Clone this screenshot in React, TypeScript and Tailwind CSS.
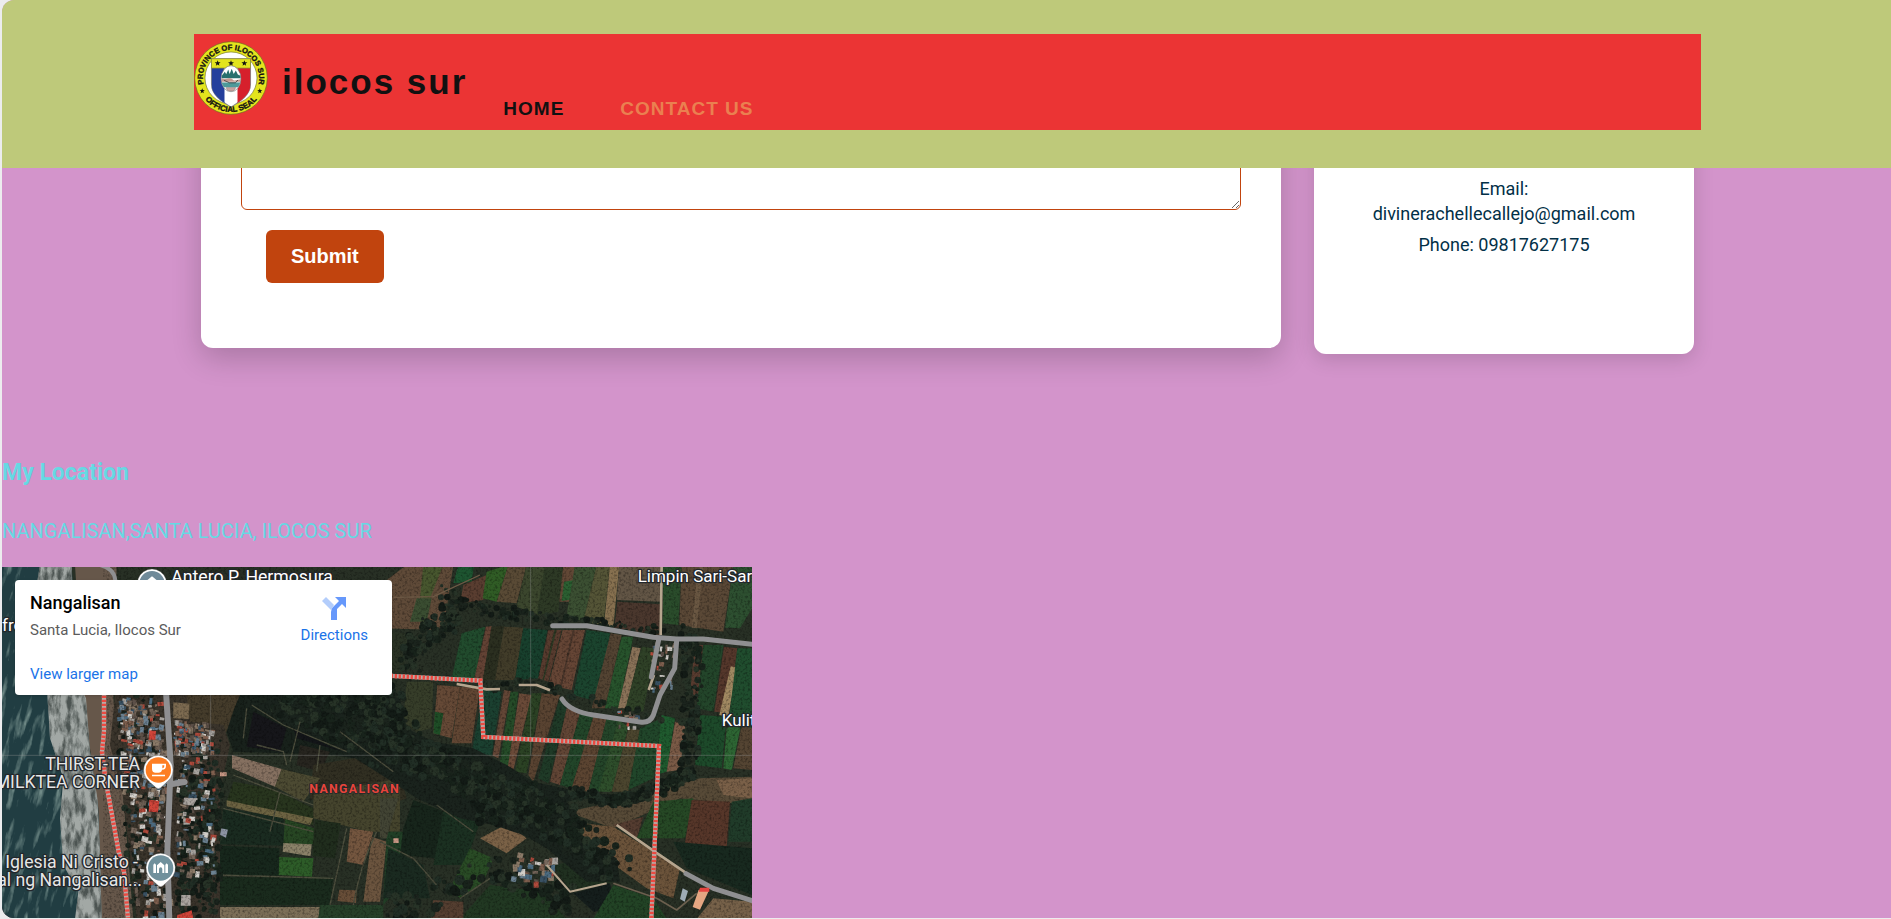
import React from "react";

function createRandom(seed: number) {
  let state = seed;
  return () => {
    state = (state * 1664525 + 1013904223) % 4294967296;
    return state / 4294967296;
  };
}

function Star({ x, y, r, fill = "#111" }: { x: number; y: number; r: number; fill?: string }) {
  const points = Array.from({ length: 10 }, (_, i) => {
    const a = (Math.PI / 5) * i - Math.PI / 2;
    const d = i % 2 ? r * 0.42 : r;
    return `${(x + d * Math.cos(a)).toFixed(2)},${(y + d * Math.sin(a)).toFixed(2)}`;
  }).join(" ");
  return <polygon points={points} fill={fill} />;
}

function Seal() {
  return (
    <svg viewBox="0 0 216 216" className="size-[74px] shrink-0" role="img" aria-label="Province of Ilocos Sur official seal">
      <defs>
        <path id="seal-top" d="M 43 158 A 82 82 0 1 1 173 158" />
        <path id="seal-bottom" d="M 12 124 A 97 97 0 0 0 204 124" />
        <clipPath id="seal-shield">
          <path d="M51 78H165V126C165 156 138 174 108 193C78 174 51 156 51 126Z" />
        </clipPath>
        <clipPath id="seal-oval">
          <ellipse cx="108" cy="110" rx="28" ry="37" />
        </clipPath>
      </defs>
      <circle cx="108" cy="108" r="106" fill="#e3e41d" stroke="#6e7020" strokeWidth="2" />
      <circle cx="108" cy="108" r="76" fill="#fff" stroke="#77792c" strokeWidth="2" />
      <path d="M51 52H165V126C165 156 138 174 108 193C78 174 51 156 51 126Z" fill="#fff" stroke="#8a8a8a" strokeWidth="3" />
      <g clipPath="url(#seal-shield)">
        <rect x="51" y="78" width="38" height="120" fill="#243f9c" />
        <rect x="127" y="78" width="38" height="120" fill="#d6202c" />
      </g>
      <rect x="51" y="52" width="114" height="27" fill="#e3e41d" stroke="#8a8a34" strokeWidth="2" />
      <Star x={69} y={65} r={9} />
      <Star x={108} y={65} r={9} />
      <Star x={147} y={65} r={9} />
      <ellipse cx="108" cy="110" rx="29" ry="38" fill="#fff" stroke="#777" strokeWidth="2" />
      <g clipPath="url(#seal-oval)">
        <path d="M80 103L90 90L94 97L100 83L104 96L110 81L116 96L122 86L128 98L137 102V109H80Z" fill="#27706d" />
        <path d="M80 108C94 116 104 103 112 112S128 109 138 114V119H80Z" fill="#c49a91" />
        <rect x="80" y="121" width="58" height="14" fill="#4d9a9a" />
        <path d="M88 115L104 122H121L128 114" fill="none" stroke="#222" strokeWidth="2" />
        <path d="M94 136H122L116 146H98Z" fill="#c7a4a0" stroke="#555" />
      </g>
      <Star x={24} y={146} r={8} />
      <Star x={192} y={146} r={8} />
      <g className="font-['Liberation_Sans',sans-serif] font-bold" fill="#111" stroke="#111" strokeWidth="1">
        <text fontSize="22">
          <textPath href="#seal-top" startOffset="50%" textAnchor="middle">PROVINCE OF ILOCOS SUR</textPath>
        </text>
        <text fontSize="23">
          <textPath href="#seal-bottom" startOffset="50%" textAnchor="middle">OFFICIAL SEAL</textPath>
        </text>
      </g>
    </svg>
  );
}

type Field = [points: string, fill: string];

const westFields: Field[] = [
  ["560,380 720,380 680,500 640,520 560,480", "#40392a"],
  ["520,412 568,416 566,462 520,460", "#7c6a50"],
  ["720,380 1180,380 1180,600 1000,570 700,560 680,500", "#18211b"],
  ["760,440 860,490 840,560 740,545", "#16161a"],
  ["850,400 1050,470 1030,560 890,520", "#131518"],
  ["900,540 990,560 960,620 890,600", "#27251f"],
  ["940,600 1180,560 1220,700 1060,760 930,700", "#312f22"],
  ["696,570 845,612 825,665 696,610", "#857060"],
  ["845,612 960,640 910,710 825,665", "#4c4a32"],
  ["700,650 820,672 940,730 940,780 680,710", "#28351e"],
  ["680,706 940,760 930,780 680,724", "#6c6342"],
  ["670,728 850,760 858,842 660,838", "#1a2b20"],
  ["855,762 942,790 940,838 850,838", "#274623"],
  ["850,834 935,838 932,874 848,860", "#8a8168"],
  ["940,690 1200,640 1200,800 1110,800 940,760", "#45442d"],
  ["945,765 1022,775 1005,880 938,872", "#202d1d"],
  ["1050,790 1120,800 1090,900 1040,890", "#74563f"],
  ["660,842 838,850 838,932 655,930", "#17271c"],
  ["838,876 940,880 936,935 836,930", "#2d5c28"],
  ["650,936 1000,938 990,1020 655,1020", "#1a2b1d"],
  ["1115,815 1160,830 1140,1010 1090,1010", "#6b543e"],
  ["1160,800 1210,800 1200,960 1150,1020", "#213f26"],
  ["1018,974 1070,976 1068,1014 1012,1008", "#684e38"],
  ["650,1026 960,1026 955,1062 640,1062", "#7c6f58"],
  ["960,1020 1150,1020 1150,1062 955,1062", "#264029"],
];

const eastFields: Field[] = [
  ["0,60 80,0 220,0 190,195 0,190", "#5f4a38"],
  ["130,0 190,0 150,100 120,100", "#47562e"],
  ["110,100 155,100 140,170 90,170", "#3a4d31"],
  ["235,0 282,0 275,50 220,55", "#1d5430"],
  ["250,60 320,30 310,105 240,115", "#593d30"],
  ["320,20 385,0 350,110 308,100", "#305c25"],
  ["385,0 440,0 410,115 350,110", "#594a35"],
  ["440,0 495,0 480,150 410,125", "#3b462d"],
  ["495,0 550,0 535,140 470,150", "#2d3925"],
  ["550,0 585,0 570,110 538,110", "#614735"],
  ["552,50 580,46 570,104 545,108", "#2b5f31"],
  ["585,0 650,0 610,170 560,150", "#3b4f32"],
  ["650,0 690,0 670,180 610,170", "#545436"],
  ["690,0 718,0 700,185 672,180", "#86704f"],
  ["718,0 845,0 842,110 710,105", "#625545"],
  ["712,110 842,118 838,210 703,190", "#4a372d"],
  ["850,0 905,0 895,180 848,175", "#2a4c2b"],
  ["905,0 1060,0 1030,200 898,180", "#5a4836"],
  ["955,0 970,0 950,190 935,188", "#6a5742"],
  ["1060,0 1116,0 1116,130 1080,190 1035,188", "#2d4f30"],
  ["0,200 85,205 70,320 0,320", "#2a3325"],
  ["80,350 160,350 155,490 110,500 70,470", "#363d29"],
  ["172,360 240,365 215,520 160,505", "#654936"],
  ["165,440 190,445 180,510 160,505", "#1e4d26"],
  ["240,365 300,370 275,535 215,535", "#614633"],
  ["245,205 315,185 285,340 215,340", "#214b2d"],
  ["318,185 335,183 310,345 283,340", "#634234"],
  ["335,185 372,182 345,345 308,345", "#2b2f20"],
  ["372,185 430,188 405,345 345,345", "#413c29"],
  ["430,190 502,195 475,340 405,345", "#18402d"],
  ["505,195 545,195 505,350 475,340", "#573b2e"],
  ["523,195 530,195 492,345 487,345", "#2f3a25"],
  ["548,195 615,195 575,375 505,360", "#654535"],
  ["578,195 584,195 545,365 540,365", "#49352a"],
  ["620,195 690,205 655,410 580,390", "#1b442e"],
  ["692,205 725,210 675,430 635,430", "#534332"],
  ["725,215 760,215 715,430 675,430", "#27532c"],
  ["757,245 782,250 738,430 714,430", "#8a7258"],
  ["785,245 825,250 790,440 735,435", "#2f4127"],
  ["945,240 970,240 955,400 930,380", "#573b2f"],
  ["970,240 1030,240 1000,440 950,430", "#23452a"],
  ["1032,245 1072,250 1045,445 1003,440", "#55372b"],
  ["1052,304 1070,308 1045,455 1018,450", "#a08861"],
  ["1072,250 1116,250 1116,500 1045,480", "#204d2e"],
  ["310,375 365,380 335,572 275,560", "#1b4030"],
  ["372,375 392,378 355,580 338,572", "#634636"],
  ["392,380 415,380 385,610 360,590", "#254b28"],
  ["418,385 455,390 400,615 383,608", "#6a4a38"],
  ["455,385 485,385 440,625 405,620", "#2b4224"],
  ["485,385 540,390 460,650 445,630", "#594331"],
  ["540,395 560,430 505,655 475,640", "#1f3a27"],
  ["560,430 600,445 540,660 510,650", "#614535"],
  ["600,445 640,455 575,670 540,660", "#224529"],
  ["640,455 680,460 625,680 575,670", "#5b4431"],
  ["680,460 715,465 660,680 625,680", "#244529"],
  ["715,465 745,485 695,680 655,680", "#2e4e2b"],
  ["745,490 780,495 745,680 695,680", "#4b452e"],
  ["780,490 845,460 820,640 745,675", "#21462a"],
  ["845,450 885,460 860,620 825,630", "#1f5a2e"],
  ["885,470 916,480 900,615 860,620", "#7a5a46"],
  ["960,450 1040,455 1025,610 945,600", "#1d4a2a"],
  ["1040,490 1085,470 1055,615 1030,610", "#2d6533"],
  ["1085,480 1116,490 1116,615 1060,610", "#544432"],
  ["560,740 760,700 960,640 1116,635 1116,720 900,700 700,790", "#574a37"],
  ["1010,645 1116,640 1116,700 1030,690", "#7a6048"],
  ["820,710 940,700 915,820 770,820", "#264825"],
  ["935,705 1050,710 1040,848 915,835", "#563629"],
  ["1055,710 1116,700 1116,830 1045,830", "#203b29"],
  ["570,770 700,785 900,910 880,1000 800,970 620,840", "#6b533a"],
  ["700,780 790,755 770,820", "#543c30"],
  ["880,830 1116,850 1116,990 920,910", "#18291f"],
  ["0,700 55,700 20,820 0,820", "#424434"],
  ["100,705 195,740 165,880 60,870 70,790", "#17251b"],
  ["190,740 300,770 255,900 160,900", "#1b3021"],
  ["25,850 130,900 150,1000 10,1000", "#1a2a20"],
  ["365,785 400,790 440,820 380,865 300,820", "#7a6146"],
  ["270,850 340,880 310,950 240,1000 210,970", "#294b25"],
  ["330,960 490,980 560,1062 240,1062", "#213822"],
  ["520,900 680,870 700,950 570,980", "#203020"],
  ["580,985 690,955 710,1030 640,1040", "#151e1c"],
  ["160,1005 250,1010 250,1062 150,1062", "#543e30"],
  ["700,960 820,1000 860,1062 640,1062", "#224325"],
  ["1000,1000 1116,1010 1116,1062 950,1062", "#766149"],
];

const roofColors = ["#a6a29d", "#6c8292", "#b04a3c", "#8b7a68", "#4c6b80", "#77685c", "#d0cdc8", "#5c5048", "#395163", "#80604f", "#6b5d52"];
const leafColors = ["#131b16", "#1b241d", "#212e25", "#273327", "#18231b"];

function Scatter({ seed, count, x, y, w, h, colors, min, max, skew = 0 }: {
  seed: number; count: number; x: number; y: number; w: number; h: number;
  colors: string[]; min: number; max: number; skew?: number;
}) {
  const random = createRandom(seed);
  return (
    <g>
      {Array.from({ length: count }, (_, i) => {
        const dy = random() * h;
        const px = Math.round(x + random() * w + (dy / h) * skew);
        const py = Math.round(y + dy);
        const sw = Math.round(min + random() * (max - min));
        const sh = Math.round(min + random() * (max - min));
        return (
          <rect key={i} x={px} y={py} width={sw} height={sh}
            fill={colors[Math.floor(random() * colors.length)]}
            transform={`rotate(${Math.round(random() * 24 - 8)} ${px} ${py})`} />
        );
      })}
    </g>
  );
}

function Trees({ seed, count, line, spread, size }: {
  seed: number; count: number; line: [number, number][]; spread: number; size: number;
}) {
  const random = createRandom(seed);
  return (
    <g>
      {Array.from({ length: count }, (_, i) => {
        const t = random() * (line.length - 1);
        const k = Math.floor(t);
        const f = t - k;
        const [ax, ay] = line[k];
        const [bx, by] = line[k + 1];
        return (
          <circle key={i}
            cx={Math.round(ax + (bx - ax) * f + (random() - 0.5) * spread)}
            cy={Math.round(ay + (by - ay) * f + (random() - 0.5) * spread)}
            r={Math.round(size * (0.5 + random()))}
            fill={leafColors[Math.floor(random() * leafColors.length)]} />
        );
      })}
    </g>
  );
}

function Boundary({ d }: { d: string }) {
  return (
    <g fill="none" strokeWidth="13">
      <path d={d} stroke="#b9aaa6" />
      <path d={d} stroke="#ec4a41" strokeDasharray="7 5" />
    </g>
  );
}

function Pin({ x, y, fill, children }: { x: number; y: number; fill: string; children: React.ReactNode }) {
  return (
    <g transform={`translate(${x} ${y})`}>
      <path d="M0-44A44 44 0 0 1 28 34L7 53Q0 59-7 53L-28 34A44 44 0 0 1 0-44Z" fill="#fff" stroke="#555" strokeWidth="1" />
      <circle r="38" fill={fill} />
      {children}
    </g>
  );
}

function SatelliteMap() {
  return (
    <svg viewBox="6 6 2250 1053" preserveAspectRatio="xMinYMin slice" className="block h-full w-full" role="img" aria-label="Satellite map of Nangalisan">
      <defs>
        <filter id="grain" x="0" y="0" width="100%" height="100%" colorInterpolationFilters="sRGB">
          <feTurbulence type="fractalNoise" baseFrequency="0.14" numOctaves="2" seed="4" />
          <feColorMatrix values="0 0 0 0 0  0 0 0 0 0  0 0 0 0 0  0.9 0 0 0 -0.4" />
        </filter>
        <filter id="surf" x="0" y="0" width="100%" height="100%" colorInterpolationFilters="sRGB">
          <feTurbulence type="fractalNoise" baseFrequency="0.05 0.011" numOctaves="4" seed="9" />
          <feColorMatrix values="0 0 0 0 .5  0 0 0 0 .6  0 0 0 0 .58  3 0 0 0 -1.6" />
        </filter>
        <filter id="foam" x="0" y="0" width="100%" height="100%" colorInterpolationFilters="sRGB">
          <feTurbulence type="fractalNoise" baseFrequency="0.055 0.02" numOctaves="5" seed="21" />
          <feColorMatrix values="0 0 0 0 .3  0 0 0 0 .33  0 0 0 0 .32  3 0 0 0 -1.2" />
        </filter>
        <clipPath id="foam-area">
          <path d="M120 0H215L225 330L258 400L270 560L292 700L300 860L305 1062H225L235 980L190 900L180 760L190 640L150 520L142 390L95 150Z" />
        </clipPath>
        <clipPath id="sea-area">
          <path d="M0 0H215L235 380L270 560L295 730L305 1062H0Z" />
        </clipPath>
      </defs>

      <rect width="2260" height="1062" fill="#283025" />
      {westFields.map(([points, fill], i) => <polygon key={i} points={points} fill={fill} />)}
      <g transform="translate(1140)">
        {eastFields.map(([points, fill], i) => <polygon key={i} points={points} fill={fill} />)}
      </g>

      <path d="M1130 380L1200 400L1220 490L1300 530L1420 550L1520 600L1600 650L1740 680L1840 690L1960 670L2020 620L2080 600L2090 630L2000 660L1930 710L1840 725L1760 700L1700 710L1740 760L1720 800L1850 880L1860 950L1760 950L1640 850L1570 810L1480 780L1380 760L1250 700L1160 640L1050 570L740 430L720 380Z" fill="#1a231d" />
      <Trees seed={3} count={500} spread={95} size={10} line={[[1100, 480], [1220, 560], [1360, 610], [1480, 690], [1590, 700]]} />
      <Trees seed={5} count={190} spread={100} size={10} line={[[1440, 720], [1640, 740], [1720, 830], [1850, 910]]} />
      <Trees seed={7} count={160} spread={36} size={8} line={[[1700, 680], [1850, 710], [1960, 680], [2080, 620]]} />
      <Trees seed={11} count={130} spread={65} size={8} line={[[1360, 70], [1350, 170], [1270, 200], [1230, 290]]} />
      <Trees seed={13} count={120} spread={34} size={7} line={[[1370, 100], [1480, 140], [1600, 155], [1780, 175], [1980, 200]]} />
      <Trees seed={17} count={130} spread={55} size={8} line={[[2060, 200], [2080, 300], [2070, 440], [2070, 590]]} />
      <Trees seed={19} count={50} spread={28} size={7} line={[[1480, 365], [1600, 350], [1700, 390], [1880, 440], [2000, 460]]} />
      <Trees seed={23} count={110} spread={100} size={9} line={[[1100, 400], [1160, 430], [1220, 540]]} />
      <Trees seed={29} count={100} spread={80} size={11} line={[[1180, 1030], [1260, 1030], [1480, 900], [1640, 980], [1700, 1010]]} />
      <Trees seed={31} count={240} spread={130} size={9} line={[[850, 390], [960, 430], [1050, 470], [1150, 540]]} />
      <g fill="none" stroke="#4d4e3d" strokeWidth="4">
        <path d="M755 420L850 480L1040 560M740 430L730 520M770 540L850 560L860 600M900 470L870 590M960 540L950 620M1020 500L1180 620" />
        <path d="M700 630L940 720M840 680L810 800M670 730L940 800M660 930L1000 940M1040 790L990 1020M1130 800Q1080 900 1060 1020" />
        <path d="M1140 830L1240 880L1310 960M1310 720L1420 800M1380 1000L1470 940" />
      </g>

      <path d="M225 0H350L340 400L370 700L400 1062H300L290 700L250 400Z" fill="#66574a" />
      <g clipPath="url(#sea-area)">
        <rect width="310" height="1062" fill="#213d42" />
        <g transform="rotate(12 155 530)">
          <rect x="-160" y="-60" width="640" height="1200" filter="url(#surf)" />
        </g>
      </g>
      <g clipPath="url(#foam-area)">
        <rect width="320" height="1062" fill="#a2a8a5" />
        <rect width="320" height="1062" filter="url(#foam)" />
      </g>

      <path d="M345 390H640L690 540L660 680V1062H410L370 700L330 540Z" fill="#3a342b" />
      <path d="M560 390H720L680 480L570 470Z" fill="#453c2b" />
      <path d="M520 412L568 416L566 462L520 460Z" fill="#7c6a50" />
      <Trees seed={37} count={330} spread={130} size={8} line={[[600, 560], [600, 800], [590, 1050]]} />
      <Trees seed={41} count={170} spread={110} size={7} line={[[410, 410], [410, 640], [440, 850], [450, 1050]]} />
      <Scatter seed={43} count={210} x={345} y={392} w={130} h={280} colors={roofColors} min={5} max={20} skew={20} />
      <Scatter seed={47} count={120} x={520} y={465} w={115} h={100} colors={roofColors} min={5} max={17} />
      <Scatter seed={53} count={110} x={520} y={570} w={120} h={350} colors={roofColors} min={5} max={20} />
      <Scatter seed={59} count={130} x={385} y={670} w={105} h={390} colors={roofColors} min={5} max={21} skew={15} />
      <Scatter seed={61} count={36} x={1530} y={860} w={130} h={90} colors={roofColors} min={8} max={22} />
      <Scatter seed={67} count={30} x={1950} y={230} w={70} h={140} colors={roofColors} min={5} max={16} />
      <Scatter seed={71} count={16} x={1850} y={435} w={70} h={50} colors={roofColors} min={5} max={15} />
      <path d="M448 704L478 708L474 742L446 740Z M448 496L468 498L466 524L446 524Z M532 1050L575 1036L580 1062H530Z" fill="#cf4439" />
      <path d="M552 698L592 700L580 722L550 718Z M544 990H572V1022H542Z" fill="#aaa49f" />
      <path d="M660 622H680V634H660Z M1180 820H1196V834H1180Z" fill="#c99885" />
      <path d="M664 790L684 794L678 818L660 810Z" fill="#8c93a2" />

      <rect x="310" width="1950" height="1062" filter="url(#grain)" />

      <g fill="none" stroke="#999" strokeOpacity=".35" strokeWidth="3">
        <path d="M0 571H2260M632 390V571M1592 0V571" />
      </g>
      <g fill="none" stroke="#b6a58e" strokeWidth="8" strokeLinejoin="round">
        <path d="M1985 0L1982 210M1962 330L1946 375" />
        <path d="M1370 357L1460 373L1500 372M1556 360L1610 360L1650 376" />
        <path d="M1850 780L1964 860L2060 925" />
        <path d="M1640 900L1710 980L1820 955" strokeWidth="6" />
        <path d="M1180 97L1300 95L1440 30" stroke="#6e5a46" strokeWidth="4" />
        <path d="M1840 955L1970 1000L2030 1035L2090 985" stroke="#6b5f4e" strokeWidth="5" />
      </g>
      <g fill="none" stroke="#8f8f91" strokeWidth="15" strokeLinecap="round" strokeLinejoin="round">
        <path d="M1658 182H1760L1960 217L2030 222H2110L2260 238" />
        <path d="M1976 224L1954 336" />
        <path d="M2030 226L2024 310L1980 390L1960 450Q1950 475 1920 471L1900 468L1780 450Q1710 440 1686 402" />
        <path d="M2058 926L2140 970L2260 1008" />
        <path d="M498 380L512 600L502 860L508 1062M512 658L554 651" strokeWidth="18" />
        <path d="M300 0Q342 10 346 46" strokeWidth="12" />
      </g>
      <path d="M2096 974L2126 978L2100 1034L2078 1026Z" fill="#e5a682" />
      <path d="M2100 968H2128V980H2096Z" fill="#e54540" />
      <path d="M2048 970L2064 978L2054 1010L2040 1002Z" fill="#9eabb5" />
      <Boundary d="M312 380V500L306 560L316 640L356 860L372 920L384 1062" />
      <Boundary d="M1160 332L1441 347L1450 516L1977 543L1954 1062" />

      <Pin x={456} y={56} fill="#6f8a99">
        <path d="M-20-6L0-22L20-6V12H-20Z" fill="#fff" />
      </Pin>
      <Pin x={475} y={615} fill="#fd7e23">
        <path d="M-19-19H23V-12Q23-1 12-1H11Q10 8 0 8H-8Q-19 8-19-4Z M12-14V-5Q18-5 18-14Z" fill="#fff" fillRule="evenodd" />
        <path d="M-19 14H20V19H-19Z" fill="#fff" />
      </Pin>
      <Pin x={482} y={909} fill="#70909c">
        <path d="M-22-10L-18-14L-14-10V15H-22Z M22-10L18-14L14-10V15H22Z M-11 15V-8L0-18L11-8V15H5V4Q5-2 0-2T-5 4V15Z" fill="#fff" />
      </Pin>

      <g className="font-[Roboto,sans-serif]" fill="#fff" stroke="#23272b" strokeWidth="8" strokeLinejoin="round" paintOrder="stroke" fontSize="51">
        <text x="514" y="55" fontSize="53">Antero P. Hermosura</text>
        <text x="6" y="199">fro</text>
        <text x="1913" y="51">Limpin Sari-Sari</text>
        <text x="2165" y="484">Kulitan</text>
        <g fill="#e6e6e6" fontSize="53" textAnchor="end">
          <text x="420" y="615">THIRST-TEA</text>
          <text x="420" y="668">MILKTEA CORNER</text>
          <text x="414" y="909">Iglesia Ni Cristo -</text>
          <text x="426" y="963">Lokal ng Nangalisan...</text>
        </g>
        <text x="928" y="685" fill="#e9453a" fontSize="37" fontWeight="700" letterSpacing="4" strokeWidth="5">NANGALISAN</text>
      </g>
    </svg>
  );
}

function DirectionsIcon() {
  return (
    <svg viewBox="0 0 24 24" className="size-6" aria-hidden="true">
      <path d="M0 4L4 0L12 8L9 13Z" fill="#b3cdfb" />
      <path d="M9 23V15Q9 12 11 10L17 4L13 0H24V11L20 7L15 12Q15 12 15 15V23Z" fill="#6698fb" />
    </svg>
  );
}

function Header() {
  return (
    <header className="relative z-10 bg-[#bec97a] pt-[34px] pb-[38px]">
      <div className="ml-48 mr-[190px] flex h-24 items-start bg-[#eb3434] font-['Liberation_Sans',Arial,sans-serif] font-bold">
        <div className="pt-[7px]"><Seal /></div>
        <h1 className="ml-[14px] pt-7 text-[35px] leading-10 tracking-[2px] text-[#111]">ilocos sur</h1>
        <nav className="ml-9 flex gap-14 pt-[65px] text-[19px] leading-5 tracking-[1px]">
          <a href="#home" className="text-[#111]">HOME</a>
          <a href="#contact" className="text-[#ea8050]">CONTACT US</a>
        </nav>
      </div>
    </header>
  );
}

export default function App() {
  return (
    <div className="min-h-screen overflow-hidden bg-[#ececee] pb-px pl-0.5 font-[Roboto,sans-serif]">
      <div className="overflow-hidden rounded-l-xl bg-[#d394cb]">
        <Header />
        <main>
          <section id="contact" className="-mt-10 ml-[199px] mr-[197px] flex items-start gap-[33px]">
            <form className="flex min-w-0 flex-1 flex-col items-start rounded-xl bg-white px-10 pb-[65px] shadow-[0_10px_30px_rgba(0,0,0,0.2)]">
              <textarea aria-label="Message" className="block h-[82px] w-full resize-y rounded-md border border-[#c1440e] p-3 outline-none" />
              <button type="submit" className="ml-[25px] mt-5 rounded-md bg-[#c1440e] px-[25px] pt-[14px] pb-[15px] font-['Liberation_Sans',Arial,sans-serif] text-xl leading-6 font-bold text-white">
                Submit
              </button>
            </form>
            <aside className="h-[226px] w-[380px] shrink-0 rounded-xl bg-white px-8 pt-12 text-center text-[18px] leading-[25px] text-[#023047] shadow-[0_5px_20px_rgba(0,0,0,0.15)]">
              <p>Email: divinerachellecallejo@gmail.com</p>
              <p className="mt-[6px]">Phone: 09817627175</p>
            </aside>
          </section>
          <section className="mt-[103px] text-[#66d9e3]">
            <h2 className="text-[23px] leading-8 font-bold">My Location</h2>
            <p className="mt-[26px] text-[20px] leading-8">NANGALISAN,SANTA LUCIA, ILOCOS SUR</p>
            <div className="relative mt-5 h-[351px] w-full max-w-[750px] overflow-hidden">
              <SatelliteMap />
              <div className="absolute left-[13px] top-[13px] flex h-[115px] w-[377px] justify-between rounded-sm bg-white pl-[15px] pr-6 text-[15px] text-[#1a73e8] shadow-sm">
                <div className="pt-[11px]">
                  <h3 className="text-[18px] leading-6 font-medium text-black">Nangalisan</h3>
                  <p className="mt-[5px] leading-5 text-[#5b5b5b]">Santa Lucia, Ilocos Sur</p>
                  <a href="#map" className="mt-6 block leading-5">View larger map</a>
                </div>
                <a href="#directions" className="flex flex-col items-center pt-[17px]">
                  <DirectionsIcon />
                  <span className="mt-1 leading-5">Directions</span>
                </a>
              </div>
            </div>
          </section>
        </main>
      </div>
    </div>
  );
}
